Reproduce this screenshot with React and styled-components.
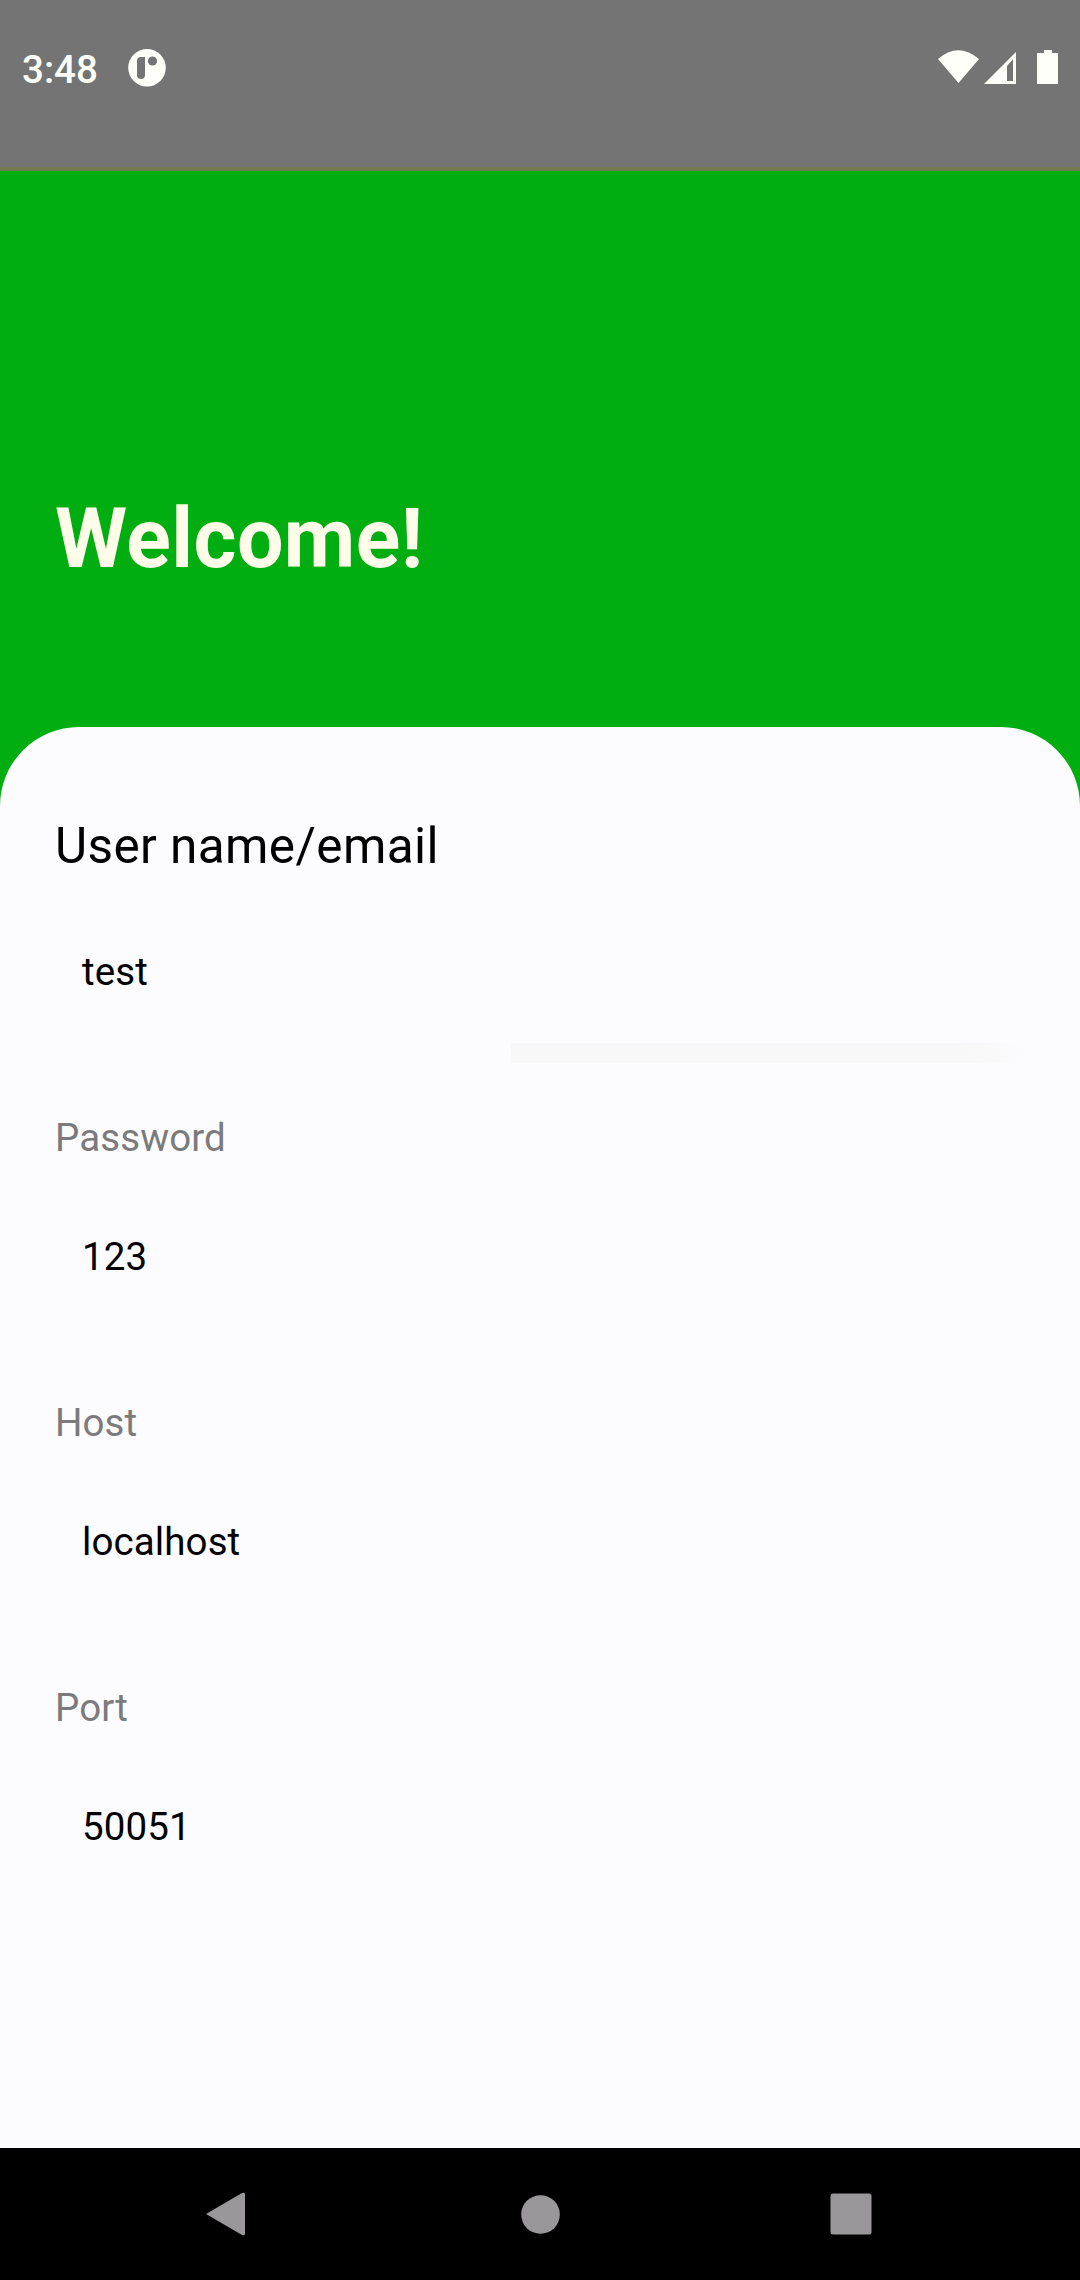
import React from "react";
import styled, { createGlobalStyle } from "styled-components";

const GlobalStyle = createGlobalStyle`
  * { box-sizing: border-box; }
  body { margin: 0; background: #000; font-family: Roboto, "Liberation Sans", sans-serif; }
`;

const Screen = styled.div`
  width: 1080px;
  height: 2280px;
  display: flex;
  flex-direction: column;
  overflow: hidden;
  background: #00ae12;
`;

const StatusBar = styled.header`
  flex: none;
  height: 171px;
  padding: 47px 20px 0 22px;
  display: flex;
  justify-content: space-between;
  align-items: flex-start;
  background: #747474;
  border-bottom: 4px solid #757a50;
  color: #fffffa;
`;

const StatusGroup = styled.div`
  display: flex;
  align-items: center;
  height: 42px;
`;

const Clock = styled.span`
  width: 106px;
  padding-top: 3px;
  font-size: 38.5px;
  line-height: 44px;
  font-weight: 500;
`;

const Hero = styled.section`
  flex: none;
  height: 556px;
  padding: 319px 55px 0;
`;

const Title = styled.h1`
  margin: 0;
  font-size: 82.5px;
  line-height: 98px;
  font-weight: 700;
  letter-spacing: 0.4px;
  color: #fffde9;
`;

const Sheet = styled.main`
  flex: 1;
  padding: 90px 55px 0;
  background: #fcfcff;
  border-radius: 79px 79px 0 0;
`;

const Field = styled.div`
  height: 285px;
  display: flex;
  flex-direction: column;
`;

const Label = styled.label`
  height: ${(p) => (p.$active ? 132 : 129)}px;
  padding-top: ${(p) => (p.$active ? 0 : 10)}px;
  margin-top: ${(p) => (p.$active ? 0 : 3)}px;
  font-size: ${(p) => (p.$active ? 49.5 : 38.5)}px;
  line-height: ${(p) => (p.$active ? 58 : 46)}px;
  letter-spacing: ${(p) => (p.$active ? 0.4 : 0.1)}px;
  color: ${(p) => (p.$active ? "#000" : "#7b7b7b")};
`;

const Value = styled.div`
  height: 46px;
  padding-left: 27px;
  font-size: 38.5px;
  line-height: 46px;
  letter-spacing: 0.1px;
  color: #000;
`;

const Underline = styled.div`
  width: 516px;
  height: 20px;
  margin: 48px 0 0 456px;
  background: linear-gradient(90deg, #f9f8f8 88%, #fcfbfd);
`;

const NavBar = styled.nav`
  flex: none;
  height: 132px;
  display: flex;
  justify-content: space-between;
  align-items: center;
  padding: 0 208px 0 205px;
  background: #000;
`;

const HomeIcon = styled.svg`
  margin-left: 5px;
`;

const fields = [
  { label: "User name/email", value: "test", active: true },
  { label: "Password", value: "123" },
  { label: "Host", value: "localhost" },
  { label: "Port", value: "50051" },
];

function AppBadge() {
  return (
    <svg width="38" height="38" viewBox="0 0 38 38">
      <circle cx="19" cy="18.800" r="18.800" fill="#fffffa" />
      <path d="M9 12a4 4 0 0 1 4-4h4v18a4 4 0 0 1-8 0z" fill="#747474" />
      <circle cx="24.500" cy="12" r="4.600" fill="#747474" />
    </svg>
  );
}

function StatusIcons() {
  return (
    <svg width="122" height="36" viewBox="938 50 122 36">
      <path d="M938 59Q958 41.500 979 59L958.500 83Z" fill="#fffffa" />
      <path d="M1016 52V84H984ZM1013 59L1007 66V81H1013Z" fill="#fffffa" fillRule="evenodd" />
      <path d="M1037 53h7v-3h8v3h6v31h-21z" fill="#fffffa" />
    </svg>
  );
}

export default function App() {
  return (
    <>
      <GlobalStyle />
      <Screen>
        <StatusBar>
          <StatusGroup>
            <Clock>3:48</Clock>
            <AppBadge />
          </StatusGroup>
          <StatusGroup>
            <StatusIcons />
          </StatusGroup>
        </StatusBar>
        <Hero>
          <Title>Welcome!</Title>
        </Hero>
        <Sheet>
          {fields.map((f) => (
            <Field key={f.label}>
              <Label $active={f.active}>{f.label}</Label>
              <Value>{f.value}</Value>
              {f.active && <Underline />}
            </Field>
          ))}
        </Sheet>
        <NavBar>
          <svg width="40" height="44" viewBox="0 0 40 44">
            <path d="M1 22L37 1Q40 0 40 2V42Q40 44 37 43Z" fill="#999799" />
          </svg>
          <HomeIcon width="39" height="39" viewBox="0 0 39 39">
            <circle cx="19.500" cy="19.500" r="19.300" fill="#999799" />
          </HomeIcon>
          <svg width="42" height="42" viewBox="0 0 42 42">
            <rect x="0.500" y="0.500" width="41" height="41" rx="2.500" fill="#999799" />
          </svg>
        </NavBar>
      </Screen>
    </>
  );
}
